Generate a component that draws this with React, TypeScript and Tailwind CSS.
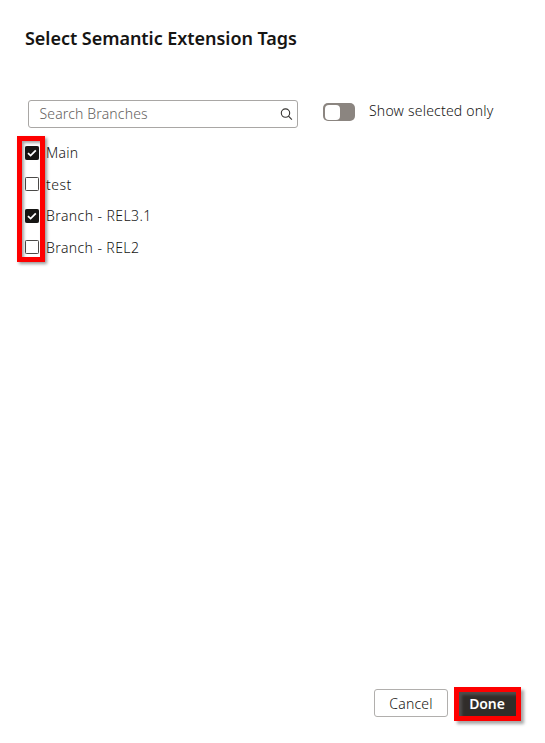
const branches = [
  { name: 'Main', checked: true, track: 'tracking-[0.25px]' },
  { name: 'test', checked: false, track: 'pt-px tracking-[0.45px]' },
  { name: 'Branch - REL3.1', checked: true, track: 'tracking-[0.42px]' },
  { name: 'Branch - REL2', checked: false, track: 'pt-px tracking-[0.4px]' },
];

function Checkbox({ checked }: { checked: boolean }) {
  return (
    <svg width="14" height="14" viewBox="0 0 14 14" className="shrink-0">
      <rect x="0.5" y="0.5" width="13" height="13" rx="0.8" fill={checked ? '#161513' : '#fff'} stroke={checked ? '#161513' : '#4b4947'} />
      {checked && <path d="M3 7.2 5.6 9.6 10.8 4.3" fill="none" stroke="#fff" strokeWidth="1.8" />}
    </svg>
  );
}

export default function App() {
  return (
    <main className="flex h-[743px] w-[545px] flex-col bg-white font-['Noto_Sans',sans-serif] text-sm font-light text-[#161513]">
      <h1 className="mt-[26px] ml-[25px] h-6 text-[18px] leading-6 font-semibold tracking-[-0.04px] whitespace-nowrap text-[#161513]">
        Select Semantic Extension Tags
      </h1>
      <div className="mt-[50px] ml-7 flex h-7 items-start">
        <div className="flex h-7 w-[270px] items-center justify-between rounded-[3px] border border-[#a9a7a5] pr-1 pl-[10.5px]">
          <span className="tracking-[0.15px] text-[#64615e]">Search Branches</span>
          <svg width="13" height="13" viewBox="0 0 13 13" fill="none" stroke="#353331" strokeWidth="1.1">
            <circle cx="5.5" cy="5.1" r="4.2" />
            <path d="m8.5 8.1 3.4 3.5" />
          </svg>
        </div>
        <div className="mt-[3px] ml-[25px] flex h-[18px] w-8 items-center rounded-[5px] bg-[#8b8580] pl-[1.5px]">
          <div className="h-[15px] w-[15px] rounded-[4px] bg-white" />
        </div>
        <span className="mt-px ml-[14px] leading-5 tracking-[0.21px] whitespace-nowrap">Show selected only</span>
      </div>
      <div className="relative mt-[9px] ml-[25px] h-[126px]">
        <ul>
          {branches.map((b) => (
            <li key={b.name} className="flex h-[31.5px] items-center gap-[7px]">
              <Checkbox checked={b.checked} />
              <span className={b.track}>{b.name}</span>
            </li>
          ))}
        </ul>
        <div className="absolute top-[-1px] left-[-8px] h-[126px] w-7 border-[5px] border-[#fe0000] shadow-[2px_2px_3px_rgba(0,0,0,0.4),inset_2px_2px_3px_rgba(0,0,0,0.35)]" />
      </div>
      <div className="mt-auto mr-6 mb-[22px] flex items-start justify-end gap-[6px]">
        <button className="mt-[2px] h-7 w-[74px] rounded-[3px] border border-[#b1afad] pt-px tracking-[0.2px]">Cancel</button>
        <button className="h-[34px] w-[67px] border-[5px] border-[#fe0000] bg-[#312d2a] pr-px font-semibold tracking-[-0.1px] text-white shadow-[3px_3px_3px_rgba(0,0,0,0.35),inset_3px_3px_3px_rgba(100,100,100,0.6)]">Done</button>
      </div>
    </main>
  );
}
